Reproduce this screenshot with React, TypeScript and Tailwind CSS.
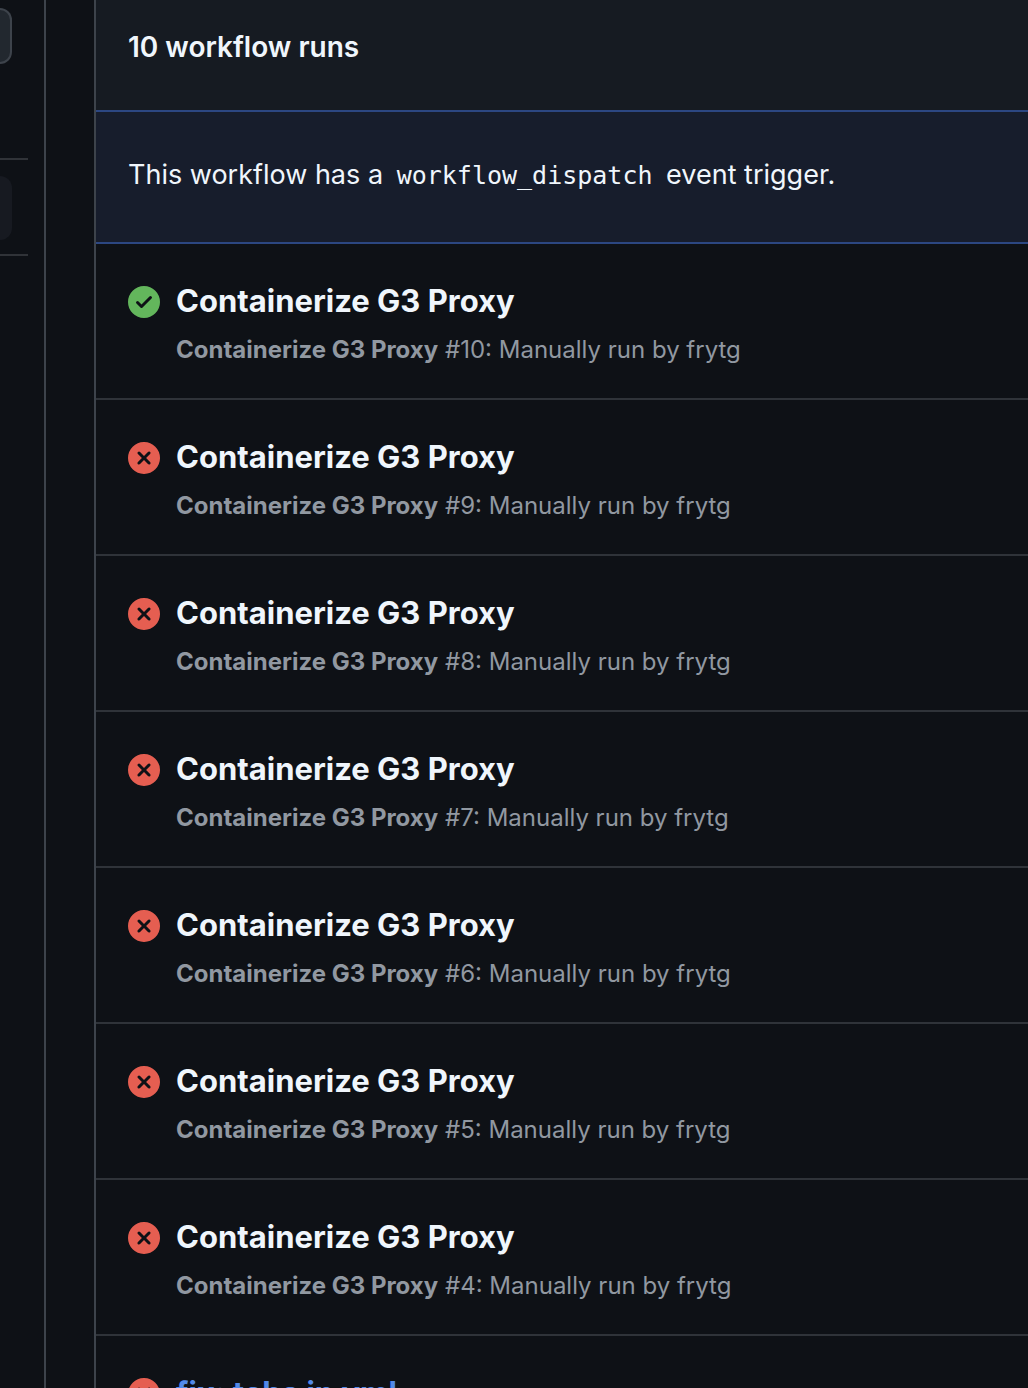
const runs = [
  { id: 10, ok: true },
  { id: 9, ok: false },
  { id: 8, ok: false },
  { id: 7, ok: false },
  { id: 6, ok: false },
  { id: 5, ok: false },
  { id: 4, ok: false },
];

function StatusIcon({ ok }: { ok: boolean }) {
  return (
    <svg viewBox="0 0 16 16" className={`size-8 shrink-0 ${ok ? "text-[#63b65c]" : "text-[#e55e51]"}`} fill="currentColor" role="img" aria-label={ok ? "Success" : "Failed"}>
      {ok ? (
        <path d="M8 16A8 8 0 1 1 8 0a8 8 0 0 1 0 16Zm3.78-9.72a.751.751 0 0 0-.018-1.042.751.751 0 0 0-1.042-.018L6.75 9.19 5.28 7.72a.751.751 0 0 0-1.042.018.751.751 0 0 0-.018 1.042l2 2a.75.75 0 0 0 1.06 0Z" />
      ) : (
        <path d="M2.343 13.657A8 8 0 1 1 13.658 2.343 8 8 0 0 1 2.343 13.657ZM6.03 4.97a.751.751 0 0 0-1.042.018.751.751 0 0 0-.018 1.042L6.94 8 4.97 9.97a.749.749 0 0 0 .326 1.275.749.749 0 0 0 .734-.215L8 9.06l1.97 1.97a.749.749 0 0 0 1.275-.326.749.749 0 0 0-.215-.734L9.06 8l1.97-1.97a.749.749 0 0 0-.326-1.275.749.749 0 0 0-.734.215L8 6.94Z" />
      )}
    </svg>
  );
}

function RunRow({ id, ok }: { id: number; ok: boolean }) {
  return (
    <li className="flex gap-4 border-b-2 border-[#2f3339] px-8 pt-8 pb-7">
      <div className="pt-2.5">
        <StatusIcon ok={ok} />
      </div>
      <div>
        <a href="#" className="block text-[31px] leading-[50px] font-bold text-[#f0f6fc]">Containerize G3 Proxy</a>
        <p className="mt-1 text-2xl leading-10 text-[#9198a1]">
          <span className="font-bold">Containerize G3 Proxy</span> #{id}: Manually run by frytg
        </p>
      </div>
    </li>
  );
}

export default function App() {
  return (
    <div className="flex h-screen overflow-hidden bg-[#0e1116] font-['Inter',sans-serif]">
      <aside className="w-[46px] shrink-0 border-r-2 border-[#3d434b]">
        <div className="pt-2">
          <button aria-label="New workflow" className="block h-14 w-3 rounded-r-xl border-2 border-l-0 border-[#3d434b] bg-[#22282f]" />
        </div>
        <div className="mt-[94px] mr-4 border-y-2 border-[#303338] pt-4 pb-3.5">
          <div className="h-16 w-3 rounded-r-xl bg-[#171a21]" />
        </div>
      </aside>
      <main className="ml-12 min-w-0 flex-1 border-l-2 border-[#3d434b]">
        <header className="bg-[#161b22] px-8 pt-6 pb-10">
          <h1 className="text-[28px] leading-[46px] font-semibold text-[#f0f6fc]">10 workflow runs</h1>
        </header>
        <div className="border-y-2 border-[#2c4782] bg-[#171d2c] px-8 pt-10 pb-11">
          <p className="text-[27px] leading-[46px] text-[#f0f6fc]">
            This workflow has a <code className="px-1.5 font-['DejaVu_Sans_Mono',monospace] text-[25px] leading-none">workflow_dispatch</code> event trigger.
          </p>
        </div>
        <ul>
          {runs.map((run) => (
            <RunRow key={run.id} id={run.id} ok={run.ok} />
          ))}
          <li className="flex gap-4 px-8 pt-8">
            <div className="pt-2.5">
              <StatusIcon ok={false} />
            </div>
            <a href="#" className="text-[31px] leading-[50px] font-bold text-[#5289e8]">fix: tabs in yml</a>
          </li>
        </ul>
      </main>
    </div>
  );
}
